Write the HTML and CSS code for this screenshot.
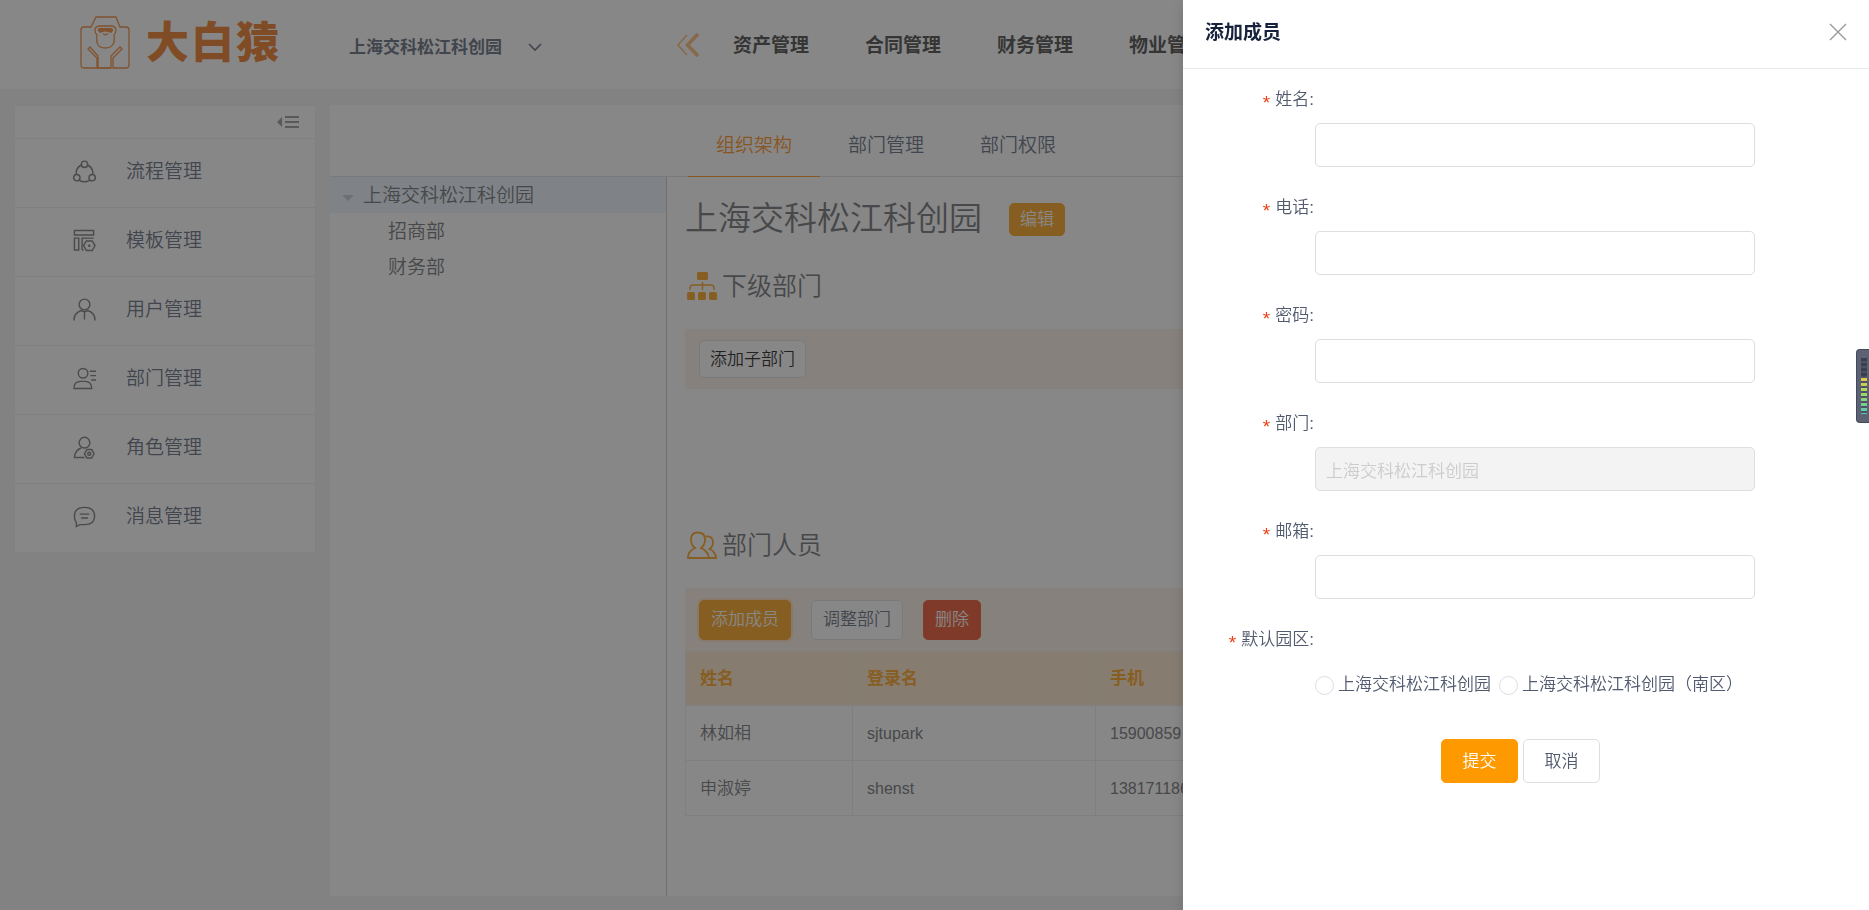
FILE: index.html
```html
<!DOCTYPE html>
<html lang="zh-CN">
<head>
<meta charset="utf-8">
<title>大白猿</title>
<link rel="stylesheet" href="styles.css">
</head>
<body>
<div class="app">
  <header class="topbar">
    <a class="brand" href="#">
      <svg class="brand-mark" viewBox="0 0 50 54" fill="none" stroke="currentColor" stroke-width="1.3">
        <path d="M17 52H4Q1 52 1 49V14Q1 11 4 11H11L16 1H36L40 11H46Q49 11 49 14V49Q49 52 46 52H33V42L42 33L40 31L31 40V52H18V40L10 31L8 33L17 42Z"/>
        <path d="M18 52H31"/>
        <path d="M19 10H32Q36 11 36 14Q36 17 34 19Q36 32 25 32Q15 32 17 19Q15 17 15 14Q15 11 19 10Z"/>
        <path d="M19 12H31Q34 13 33 15L31 17Q25 14 20 17L18 15Q17 13 19 12Z" fill="currentColor" stroke="none"/>
        <path d="M23 17.500Q25.500 20 28 17.500"/>
      </svg>
      <span class="brand-name"><span>大</span><span>白</span><span>猿</span></span>
    </a>
    <button class="park-switch" type="button">上海交科松江科创园
      <svg class="chevron" viewBox="0 0 14 14" fill="none" stroke="currentColor" stroke-width="1.600"><path d="M1 3L7 9L13 3"/></svg>
    </button>
    <button class="nav-back" type="button" aria-label="向左">
      <svg viewBox="0 0 24 24" fill="none" stroke="currentColor"><path d="M11 2L2 12L11 22" stroke-width="1.600"/><path d="M22 1L11.500 12L22 23" stroke-width="3.500"/></svg>
    </button>
    <nav class="main-nav">
      <a href="#">资产管理</a>
      <a href="#">合同管理</a>
      <a href="#">财务管理</a>
      <a href="#">物业管理</a>
    </nav>
  </header>

  <div class="workspace">
    <aside class="sidebar">
      <button class="collapse" type="button" aria-label="收起">
        <svg viewBox="0 0 22 12" fill="currentColor"><path d="M5 1V11L0 6ZM8 0H22V2H8ZM8 5H22V7H8ZM8 10H22V12H8Z"/></svg>
      </button>
      <a class="side-item" href="#">
        <svg viewBox="0 0 24 24"><circle cx="12" cy="4.500" r="3.300"/><circle cx="4" cy="18.500" r="3.300"/><circle cx="20" cy="18.500" r="3.300"/><path d="M8.800 5.200A10 10 0 0 0 3.300 15.200M15.200 5.200A10 10 0 0 1 20.700 15.200M7 21.500Q12 24 17 21.500"/></svg>
        流程管理</a>
      <a class="side-item" href="#">
        <svg viewBox="0 0 24 24"><path d="M1.500 1.500H21.500V6.200H1.500ZM1.500 9.500H6V22H1.500ZM9.500 22V9.500H21.500M9.500 22H11"/><path d="M14 12.500H20L23 17.300L20 22.500H14L11 17.300Z"/><circle cx="17" cy="17.500" r=".6"/></svg>
        模板管理</a>
      <a class="side-item" href="#">
        <svg viewBox="0 0 24 24"><circle cx="12" cy="6.800" r="5.600"/><path d="M1 23.500Q1 15.500 8.500 13Q12 15.500 15.500 13Q23 15.500 23 23.500M12 14.500V22.500"/></svg>
        用户管理</a>
      <a class="side-item" href="#">
        <svg viewBox="0 0 24 24"><circle cx="10.500" cy="6.500" r="5"/><path d="M1 22.500Q1 15 8 15H12.500Q19.500 15 19.500 22.500ZM17.500 4.500H24M18 9H24M19 13.500H24"/></svg>
        部门管理</a>
      <a class="side-item" href="#">
        <svg viewBox="0 0 24 24"><circle cx="12" cy="7" r="5.600"/><path d="M12 22.500H1.500Q2 15 8.500 12.500"/><path d="M14.500 14H19.500L22 18.500L19.500 23H14.500L12 18.500Z"/><circle cx="17" cy="18.500" r="1.600"/></svg>
        角色管理</a>
      <a class="side-item" href="#">
        <svg viewBox="0 0 24 24"><path d="M3.500 22.500V18Q1.500 16 1.500 12Q1.500 2.500 12 2.500Q22.500 2.500 22.500 12Q22.500 20.500 12 20.500H7Z"/><path d="M7 9.500H17M8.500 13.500H15.500"/></svg>
        消息管理</a>
    </aside>

    <main class="panel">
      <nav class="tabs">
        <a class="tab tab-on" href="#">组织架构</a>
        <a class="tab" href="#">部门管理</a>
        <a class="tab" href="#">部门权限</a>
      </nav>
      <div class="panel-body">
        <ul class="tree">
          <li class="tree-root"><span class="caret"></span>上海交科松江科创园</li>
          <li class="tree-leaf">招商部</li>
          <li class="tree-leaf">财务部</li>
        </ul>
        <section class="detail">
          <div class="title-row">
            <h1>上海交科松江科创园</h1>
            <button class="btn btn-primary btn-small" type="button">编辑</button>
          </div>
          <h2>
            <svg viewBox="0 0 30 30" fill="currentColor"><rect x="10" y="1" width="11" height="8" rx="1.500"/><rect x="0" y="21" width="8" height="8" rx="1.500"/><rect x="11" y="21" width="8" height="8" rx="1.500"/><rect x="22" y="21" width="8" height="8" rx="1.500"/><path d="M3 19V17Q3 14 6 14H24Q27 14 27 17V19M15.500 11V19" fill="none" stroke="currentColor" stroke-width="1.400"/></svg>
            下级部门</h2>
          <div class="band band-sub">
            <button class="btn btn-ink" type="button">添加子部门</button>
          </div>
          <h2 class="people">
            <svg viewBox="0 0 30 30" fill="none" stroke="currentColor" stroke-width="1.800"><path d="M1 28Q1 21 8 18Q4 15 4 9.500Q4 2.500 11 2.500Q18 2.500 18 9.500Q18 15 14 18Q21 21 22 28Z"/><path d="M18.500 6.500Q26 5.500 26 12.500Q26 16.500 22.500 19Q29 22 29 28H22"/></svg>
            部门人员</h2>
          <div class="band">
            <button class="btn btn-primary btn-focus" type="button">添加成员</button>
            <button class="btn" type="button">调整部门</button>
            <button class="btn btn-danger" type="button">删除</button>
          </div>
          <table class="members">
            <thead><tr><th class="col-name">姓名</th><th class="col-login">登录名</th><th>手机</th></tr></thead>
            <tbody>
              <tr><td>林如相</td><td class="latin">sjtupark</td><td class="latin">15900859</td></tr>
              <tr><td>申淑婷</td><td class="latin">shenst</td><td class="latin">138171186</td></tr>
            </tbody>
          </table>
        </section>
      </div>
    </main>
  </div>
</div>

<div class="mask"></div>

<div class="drawer" role="dialog" aria-labelledby="drawer-title">
  <div class="drawer-head">
    <h2 class="drawer-title" id="drawer-title">添加成员</h2>
    <button class="close" type="button" aria-label="关闭"><svg viewBox="0 0 18 18" fill="none" stroke="currentColor" stroke-width="1.400"><path d="M1 1L17 17M17 1L1 17"/></svg></button>
  </div>
  <form class="form">
    <div class="field"><label for="f-name">姓名:</label><input class="text" id="f-name" type="text"></div>
    <div class="field"><label for="f-phone">电话:</label><input class="text" id="f-phone" type="text"></div>
    <div class="field"><label for="f-pass">密码:</label><input class="text" id="f-pass" type="password"></div>
    <div class="field"><label for="f-dept">部门:</label><input class="text" id="f-dept" type="text" value="上海交科松江科创园" disabled></div>
    <div class="field"><label for="f-mail">邮箱:</label><input class="text" id="f-mail" type="text"></div>
    <div class="field" role="radiogroup" aria-labelledby="f-park">
      <span class="label" id="f-park">默认园区:</span>
      <div class="radios">
        <label class="radio"><input type="radio" name="park">上海交科松江科创园</label>
        <label class="radio"><input type="radio" name="park">上海交科松江科创园（南区）</label>
      </div>
    </div>
    <div class="actions">
      <button class="btn btn-primary btn-large" type="button">提交</button>
      <button class="btn btn-large" type="button">取消</button>
    </div>
  </form>
</div>

<div class="meter"><span class="meter-bar"></span></div>
</body>
</html>
```

FILE: styles.css
```css
* { box-sizing: border-box; }

body {
  margin: 0;
  font-family: "Liberation Sans", "Noto Sans CJK SC", sans-serif;
  font-size: 17px;
  font-weight: 350;
  line-height: 24px;
  color: #515a6e;
  overflow: hidden;
}

a { color: inherit; text-decoration: none; }
button, input { font: inherit; color: inherit; }
button { cursor: pointer; }
h1, h2, ul { margin: 0; padding: 0; font-weight: 350; }
ul { list-style: none; }
svg { flex: none; }

.app {
  display: flex;
  flex-direction: column;
  height: 100vh;
  background: #f3f3f3;
}

/* top bar */
.topbar {
  display: flex;
  align-items: center;
  flex: none;
  height: 89px;
  padding-left: 80px;
  background: #fff;
  white-space: nowrap;
  overflow: hidden;
}
.brand { display: flex; align-items: center; gap: 16px; color: #f07c20; width: 269px; flex: none; padding-bottom: 4px; }
.brand-mark { width: 50px; height: 54px; }
.brand-name { display: flex; gap: 2px; font-size: 43px; font-weight: 900; line-height: 54px; color: #ed6c0a; }
.park-switch {
  display: flex;
  align-items: center;
  gap: 26px;
  width: 327px;
  flex: none;
  padding: 6px 0 0;
  border: 0;
  background: none;
  font-weight: 700;
}
.chevron { width: 14px; height: 14px; }
.nav-back { flex: none; width: 29px; padding: 0; border: 0; background: none; color: #ffb168; line-height: 0; }
.nav-back svg { width: 24px; height: 24px; display: block; }
.main-nav { display: flex; padding-top: 2px; font-size: 19px; font-weight: 700; color: #333; }
.main-nav a { padding: 0 28px; }

/* layout below the top bar */
.workspace { display: flex; flex: 1; gap: 14px; padding: 16px 15px 14px 14px; min-height: 0; }

.sidebar {
  display: flex;
  flex-direction: column;
  align-self: flex-start;
  flex: none;
  width: 302px;
  background: #fff;
  border: 1px solid #f0f0f0;
}
.collapse { align-self: stretch; display: flex; justify-content: flex-end; align-items: center; height: 32px; padding: 0 16px 4px; border: 0; background: none; color: #8c8c8c; }
.collapse svg { width: 22px; height: 12px; margin-top: 3px; }
.side-item {
  display: flex;
  align-items: center;
  gap: 30px;
  height: 69px;
  padding: 0 0 3px 58px;
  border-top: 1px solid #ededed;
  font-size: 19px;
}
.side-item svg { width: 23px; height: 23px; fill: none; stroke: #6a6a6a; stroke-width: 1.500; }

.panel { display: flex; flex-direction: column; flex: 1; min-width: 0; background: #fff; }
.tabs { display: flex; flex: none; height: 72px; padding-left: 358px; border-bottom: 1px solid #dcdee2; font-size: 19px; }
.tab { padding: 29px 28px 0; height: 72px; }
.tab-on { color: #ff8400; border-bottom: 1px solid #ff8400; }
.panel-body { display: flex; flex: 1; min-height: 0; }

.tree { flex: none; width: 337px; border-right: 1px solid #c4c4c4; font-size: 19px; color: #606266; }
.tree li { display: flex; align-items: center; height: 36px; padding-top: 1px; }
.tree-root { gap: 9px; padding-left: 12px; background: #ebf5ff; }
.tree .tree-leaf { padding-left: 58px; }
.caret { width: 0; margin-top: 4px; border: 6px solid transparent; border-top: 6px solid #c0c4cc; border-bottom: 0; }

/* department detail */
.detail { flex: 1; min-width: 0; padding-left: 18px; color: #606266; }
.title-row { display: flex; align-items: center; gap: 27px; height: 84px; }
.detail h1 { font-size: 33px; line-height: 40px; }
.detail h2 { display: flex; align-items: center; gap: 5px; height: 50px; padding-left: 2px; font-size: 25px; line-height: 36px; }
.detail h2 svg { width: 30px; height: 30px; color: #ff9900; }
.band { display: flex; align-items: center; gap: 20px; height: 63px; padding: 0 14px; background: #fff0e5; }
.band-sub { height: 60px; margin: 18px 0 131px; }
.people { margin-bottom: 18px; }

.btn {
  height: 40px;
  padding: 1px 11px 0;
  border: 1px solid #dcdee2;
  border-radius: 5px;
  background: #fff;
  color: #515a6e;
  white-space: nowrap;
}
.btn-ink { height: 38px; padding: 1px 10px 0; color: #000; }
.btn-primary { background: #ff9900; border-color: #ff9900; color: #fff; }
.btn-danger { background: #ed4014; border-color: #ed4014; color: #fff; }
.btn-focus { box-shadow: 0 0 0 2px rgba(255, 153, 0, .2); }
.btn-small { height: 33px; padding: 1px 10px 0; }
.btn-large { height: 44px; width: 77px; }

.members { width: 100%; table-layout: fixed; border-collapse: collapse; border: 1px solid #e8eaec; }
.members th, .members td { padding: 1px 14px 0; border: 1px solid #e8eaec; text-align: left; }
.members th { height: 54px; background: #ffe3c6; color: #ff9900; font-weight: 700; }
.members td { height: 55px; font-weight: 350; }
.members .latin { font-size: 16px; }
.col-name { width: 167px; }
.col-login { width: 243px; }

/* overlay */
.mask { position: fixed; inset: 0; background: rgba(55, 55, 55, .6); }
.drawer {
  position: fixed;
  top: 0;
  right: 0;
  bottom: 0;
  width: 686px;
  background: #fff;
  box-shadow: 0 4px 12px rgba(0, 0, 0, .15);
}
.drawer-head {
  display: flex;
  align-items: center;
  justify-content: space-between;
  height: 69px;
  padding: 0 22px 4px;
  border-bottom: 1px solid #e8eaec;
}
.drawer-title { padding-top: 2px; font-size: 19px; font-weight: 700; color: #17233d; }
.close { padding: 0; border: 0; background: none; color: #999; line-height: 0; }
.close svg { width: 18px; height: 18px; }

.form { padding: 19px 114px 0 19px; }
.field { display: grid; grid-template-columns: 113px 1fr; row-gap: 11px; margin-bottom: 29px; }
.field > label, .label { display: flex; justify-content: flex-end; grid-column: 1; height: 24px; padding-right: 1px; }
.field > label::before, .label::before { content: "*"; margin-right: 3px; padding-top: 4px; color: #ed4014; font-family: "Liberation Mono", monospace; font-size: 19px; }
.text, .radios { grid-column: 2; grid-row: 2; }
.text { width: 100%; height: 44px; padding: 1px 10px 0; border: 1px solid #dcdee2; border-radius: 5px; background: #fff; }
.text:disabled { background: #f3f3f3; color: #ccc; }
.radios { display: flex; gap: 8px; height: 44px; align-items: center; white-space: nowrap; }
.radio { display: flex; align-items: center; gap: 4px; }
.radio input { appearance: none; width: 19px; height: 19px; margin: 0; border: 1px solid #dcdee2; border-radius: 50%; background: #fff; }
.actions { display: flex; gap: 5px; padding: 3px 0 0 239px; }

/* level gauge docked to the window edge */
.meter {
  position: fixed;
  top: 349px;
  right: 0;
  width: 13px;
  height: 74px;
  padding: 8px 2px 8px 4px;
  border: 1px solid #444a58;
  border-right: 0;
  border-radius: 4px 0 0 4px;
  background: #5c6274;
}
.meter-bar {
  display: block;
  height: 100%;
  background:
    repeating-linear-gradient(transparent 0 3px, #4c5262 3px 5px),
    linear-gradient(#3a3f4c 0 34%, #e8c84a 34%, #a8d860 60%, #4fc8b4 100%);
}
```
